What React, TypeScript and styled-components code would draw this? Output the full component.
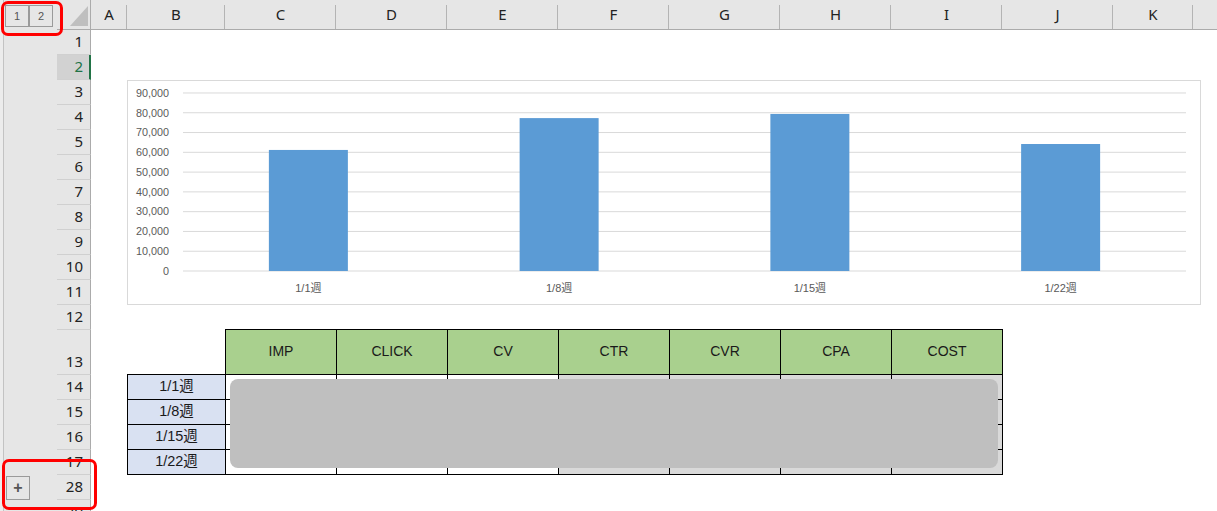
import styled, { createGlobalStyle } from "styled-components";

const GlobalStyle = createGlobalStyle`
  html, body {
    margin: 0;
    padding: 0;
    background: #fff;
  }
  body {
    font-family: "Liberation Sans", Arial, sans-serif;
  }
`;

const columns = [
  { name: "A", width: 36 },
  { name: "B", width: 98 },
  { name: "C", width: 111 },
  { name: "D", width: 111 },
  { name: "E", width: 111 },
  { name: "F", width: 111 },
  { name: "G", width: 111 },
  { name: "H", width: 111 },
  { name: "I", width: 111 },
  { name: "J", width: 111 },
  { name: "K", width: 80 },
];

type RowInfo = { label: string; height: number; collapsed?: boolean };

const rows: RowInfo[] = [
  ...Array.from({ length: 12 }, (_, i) => ({ label: String(i + 1), height: 25 })),
  { label: "13", height: 45 },
  { label: "14", height: 25 },
  { label: "15", height: 25 },
  { label: "16", height: 25 },
  { label: "17", height: 25 },
  { label: "28", height: 25, collapsed: true },
  { label: "29", height: 25 },
];

const selectedRow = "2";

const weeks = [
  { label: "1/1週", value: 61200 },
  { label: "1/8週", value: 77300 },
  { label: "1/15週", value: 79400 },
  { label: "1/22週", value: 64200 },
];

const metrics = ["IMP", "CLICK", "CV", "CTR", "CVR", "CPA", "COST"];

function BarChart() {
  const left = 55;
  const right = 1058;
  const zeroY = 190;
  const step = 19.78;
  const slot = (right - left) / weeks.length;
  const ticks = Array.from({ length: 10 }, (_, i) => i * 10000);

  return (
    <svg width="1072" height="223" viewBox="0 0 1072 223">
      {ticks.map((t, i) => {
        const y = zeroY - i * step;
        return (
          <g key={t}>
            <line x1={left} x2={right} y1={y} y2={y} stroke="#d9d9d9" strokeWidth="1" />
            <text
              x={41}
              y={y + 3.8}
              textAnchor="end"
              fontSize="10.8"
              fill="#595959"
              fontFamily='"Liberation Sans", Arial, sans-serif'
            >
              {t.toLocaleString("en-US")}
            </text>
          </g>
        );
      })}
      {weeks.map((w, i) => {
        const cx = left + slot * (i + 0.5);
        const h = (w.value / 10000) * step;
        return (
          <g key={w.label}>
            <rect x={cx - 39.5} y={zeroY - h} width={79} height={h} fill="#5b9bd5" />
            <text
              x={cx}
              y={211}
              textAnchor="middle"
              fontSize="11"
              fill="#595959"
              fontFamily='"Liberation Sans", "Noto Sans CJK JP", sans-serif'
            >
              {w.label}
            </text>
          </g>
        );
      })}
    </svg>
  );
}

export default function App() {
  return (
    <>
      <GlobalStyle />
      <Window>
        <HeaderBar>
          <LevelArea>
            <LevelButton>1</LevelButton>
            <LevelButton>2</LevelButton>
          </LevelArea>
          <SelectAll>
            <Triangle />
          </SelectAll>
          {columns.map((c) => (
            <ColHeader key={c.name} $width={c.width}>
              {c.name}
            </ColHeader>
          ))}
          <ColFiller />
        </HeaderBar>

        <Body>
          <Gutter>
            {rows.map((r) => (
              <GutterRow key={r.label} $height={r.height}>
                <OutlineCell>{r.collapsed && <ExpandButton>+</ExpandButton>}</OutlineCell>
                <RowNumber $selected={r.label === selectedRow}>{r.label}</RowNumber>
              </GutterRow>
            ))}
          </Gutter>

          <Sheet>
            <ChartBox>
              <BarChart />
            </ChartBox>

            <TableWrap>
              <Table>
                <CornerCell />
                {metrics.map((m) => (
                  <HeadCell key={m}>{m}</HeadCell>
                ))}
                {weeks.flatMap((w) => [
                  <WeekCell key={w.label}>{w.label}</WeekCell>,
                  ...metrics.map((m, i) => <DataCell key={w.label + m} $shaded={i >= 3} />),
                ])}
              </Table>
              <Redaction />
            </TableWrap>
          </Sheet>
        </Body>

        <Callout $x={1} $y={1} $w={62} $h={35} />
        <Callout $x={2} $y={459} $w={95} $h={51} />
      </Window>
    </>
  );
}

const Window = styled.div`
  position: relative;
  width: 1217px;
  height: 511px;
  overflow: hidden;
  background: #fff;
  display: flex;
  flex-direction: column;
`;

const HeaderBar = styled.div`
  display: flex;
  height: 30px;
  flex-shrink: 0;
  background: #e6e6e6;
`;

const LevelArea = styled.div`
  width: 57px;
  box-sizing: border-box;
  border-left: 3px solid #ececec;
  box-shadow: inset 1px 0 0 #c3c3c3;
  display: flex;
  align-items: flex-start;
  padding: 5px 0 0 2px;
`;

const LevelButton = styled.div`
  width: 24px;
  height: 22px;
  box-sizing: border-box;
  border: 1px solid #9a9a9a;
  display: flex;
  align-items: center;
  justify-content: center;
  font-size: 11px;
  color: #555;
`;

const SelectAll = styled.div`
  width: 34px;
  box-sizing: border-box;
  border-right: 1px solid #ababab;
  border-bottom: 1px solid #ababab;
  display: flex;
  align-items: flex-end;
  justify-content: flex-end;
  padding: 0 2px 3px 0;
`;

const Triangle = styled.div`
  width: 18px;
  height: 20px;
  background: #bfbfbf;
  clip-path: polygon(100% 0, 100% 100%, 0 100%);
`;

const ColHeader = styled.div<{ $width: number }>`
  position: relative;
  width: ${(p) => p.$width}px;
  flex-shrink: 0;
  box-sizing: border-box;
  border-bottom: 1px solid #ababab;
  display: flex;
  align-items: center;
  justify-content: center;
  font-family: "Noto Sans", "Liberation Sans", sans-serif;
  font-size: 15px;
  color: #222;
  padding-bottom: 1px;
  &::after {
    content: "";
    position: absolute;
    right: 0;
    top: 5px;
    bottom: 0;
    width: 1px;
    background: #b4b4b4;
  }
`;

const ColFiller = styled.div`
  flex: 1;
  border-bottom: 1px solid #ababab;
`;

const Body = styled.div`
  display: flex;
  flex: 1;
  min-height: 0;
`;

const Gutter = styled.div`
  width: 91px;
  flex-shrink: 0;
  display: flex;
  flex-direction: column;
  background: #e6e6e6;
  box-sizing: border-box;
  border-left: 3px solid #ececec;
`;

const GutterRow = styled.div<{ $height: number }>`
  display: flex;
  height: ${(p) => p.$height}px;
  flex-shrink: 0;
`;

const OutlineCell = styled.div`
  width: 54px;
  box-sizing: border-box;
  border-left: 1px solid #c3c3c3;
  display: flex;
  align-items: center;
  padding-left: 2px;
`;

const ExpandButton = styled.div`
  width: 24px;
  height: 24px;
  box-sizing: border-box;
  border: 1px solid #9a9a9a;
  display: flex;
  align-items: center;
  justify-content: center;
  font-size: 16px;
  font-weight: 700;
  color: #555;
`;

const RowNumber = styled.div<{ $selected?: boolean }>`
  width: 34px;
  box-sizing: border-box;
  border-bottom: 1px solid #d0d0d0;
  border-right: ${(p) => (p.$selected ? "2px solid #217346" : "1px solid #ababab")};
  background: ${(p) => (p.$selected ? "#d2d2d2" : "#e6e6e6")};
  color: ${(p) => (p.$selected ? "#217346" : "#222")};
  display: flex;
  align-items: flex-end;
  justify-content: flex-end;
  padding: 0 ${(p) => (p.$selected ? 6 : 7)}px 3px 0;
  font-family: "Noto Sans", "Liberation Sans", sans-serif;
  font-size: 15px;
  line-height: 19px;
`;

const Sheet = styled.div`
  flex: 1;
  display: flex;
  flex-direction: column;
  padding: 50px 0 0 36px;
`;

const ChartBox = styled.div`
  width: 1074px;
  height: 225px;
  box-sizing: border-box;
  border: 1px solid #d9d9d9;
  background: #fff;
  display: flex;
`;

const TableWrap = styled.div`
  position: relative;
  margin-top: 24px;
  width: max-content;
`;

const Table = styled.div`
  display: grid;
  grid-template-columns: 97px repeat(7, 110px);
  grid-template-rows: 44px repeat(4, 24px);
  gap: 1px;
  padding: 1px;
  background: #000;
`;

const CornerCell = styled.div`
  background: #fff;
  margin: -1px 0 0 -1px;
`;

const HeadCell = styled.div`
  background: #a9d08e;
  display: flex;
  align-items: center;
  justify-content: center;
  font-size: 14px;
  line-height: 1;
  color: #1a1a1a;
  padding-bottom: 2px;
`;

const WeekCell = styled.div`
  background: #d9e1f2;
  display: flex;
  align-items: center;
  justify-content: center;
  font-family: "Liberation Sans", "Noto Sans CJK JP", sans-serif;
  font-size: 14.5px;
  line-height: 1;
  color: #1a1a1a;
  padding-bottom: 2px;
`;

const DataCell = styled.div<{ $shaded?: boolean }>`
  background: ${(p) => (p.$shaded ? "#d9d9d9" : "#fff")};
`;

const Redaction = styled.div`
  position: absolute;
  left: 103px;
  top: 50px;
  width: 768px;
  height: 89px;
  border-radius: 8px;
  background: #bfbfbf;
`;

const Callout = styled.div<{ $x: number; $y: number; $w: number; $h: number }>`
  position: absolute;
  left: ${(p) => p.$x}px;
  top: ${(p) => p.$y}px;
  width: ${(p) => p.$w}px;
  height: ${(p) => p.$h}px;
  box-sizing: border-box;
  border: 3px solid #ff0000;
  border-radius: 7px;
  pointer-events: none;
`;
